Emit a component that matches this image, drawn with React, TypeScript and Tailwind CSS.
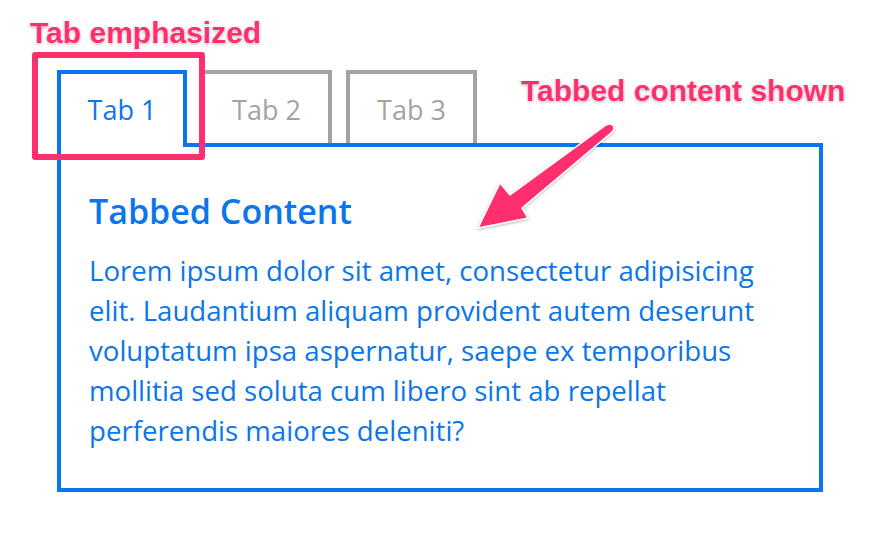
const tabs = ["Tab 1", "Tab 2", "Tab 3"];

const lines = [
  "Lorem ipsum dolor sit amet, consectetur adipisicing",
  "elit. Laudantium aliquam provident autem deserunt",
  "voluptatum ipsa aspernatur, saepe ex temporibus",
  "mollitia sed soluta cum libero sint ab repellat",
  "perferendis maiores deleniti?",
];

const note =
  "font-['Liberation_Sans',Arial,sans-serif] font-bold text-[30px] leading-[32px] text-[#ff2f6e] [text-shadow:0_0_1px_#fff,0_0_2px_#fff,0_1px_3px_rgba(0,0,0,0.35)]";

export default function App() {
  return (
    <div className="relative w-[891px] h-[553px] bg-white overflow-hidden font-['Open_Sans','Noto_Sans',sans-serif]">
      <div className="pt-[70px] pl-[57px] w-[823px]">
        {/* tabs */}
        <div className="flex items-start gap-[14px] h-[73px]">
          {tabs.map((t, i) =>
            i === 0 ? (
              <div
                key={t}
                className="relative z-10 w-[130px] h-[77px] border-4 border-b-0 border-[#0b76ea] bg-white flex items-center justify-center pt-[3px] pb-[4px] text-[27px] text-[#0b76ea]"
              >
                {t}
              </div>
            ) : (
              <div
                key={t}
                className="w-[131px] h-[73px] border-4 border-b-0 border-[#a3a3a3] flex items-center justify-center pt-[4px] text-[27px] text-[#a3a3a3]"
              >
                {t}
              </div>
            )
          )}
        </div>

        {/* content */}
        <div className="h-[349px] border-4 border-[#0b76ea] px-[28px] pt-[44px] text-[#0b76ea]">
          <h2 className="text-[34px] font-semibold leading-[40px]">Tabbed Content</h2>
          <p className="mt-[19px] text-[27.6px] leading-[40px]">
            {lines.map((l) => (
              <span key={l} className="block whitespace-nowrap">
                {l}
              </span>
            ))}
          </p>
        </div>
      </div>

      {/* annotations */}
      <div className={`absolute left-[30px] top-[17px] ${note}`}>Tab emphasized</div>
      <div className="absolute left-[32px] top-[52px] w-[173px] h-[108px] border-[6px] border-[#ff2f6e] rounded-[3px] z-20" />

      <div className={`absolute left-[521px] top-[75px] ${note}`}>Tabbed content shown</div>
      <svg
        className="absolute left-[470px] top-[122px] z-20"
        width="150"
        height="115"
        viewBox="0 0 150 115"
      >
        <defs>
          <filter id="sh" x="-20%" y="-20%" width="140%" height="140%">
            <feDropShadow dx="0" dy="1" stdDeviation="1.5" floodColor="#000" floodOpacity="0.3" />
          </filter>
        </defs>
        <path
          d="M8 106 L30 61 L40 73 L136 3 Q143 0 144 6 Q144 9 141 11 L52 86 L58 96 Z"
          fill="#ff2f6e"
          stroke="#fff"
          strokeWidth="1.5"
          strokeLinejoin="round"
          filter="url(#sh)"
        />
      </svg>
    </div>
  );
}
